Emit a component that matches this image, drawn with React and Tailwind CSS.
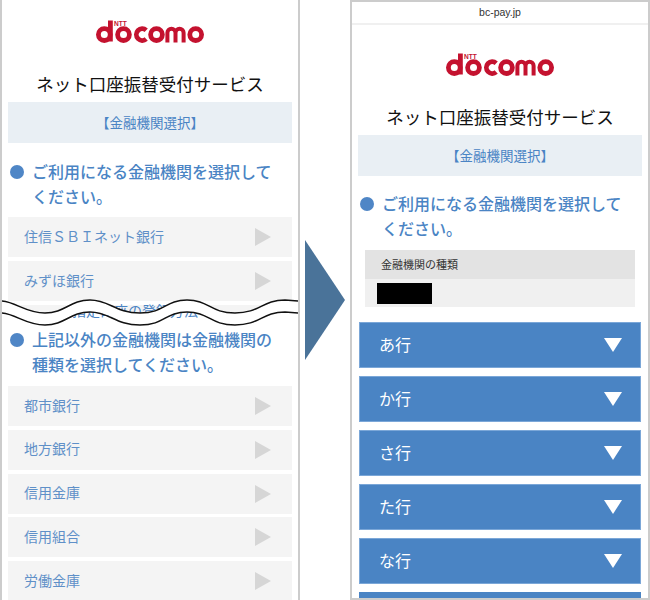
const JP = { fontFamily: '"Noto Sans CJK JP", sans-serif' };

function Logo({ className }) {
  const red = "#c4122f";
  return (
    <svg viewBox="0 0 108 23" className={className} aria-label="NTT docomo">
      <g fill="none" stroke={red} strokeWidth="4.8">
        <circle cx="8.3" cy="14.6" r="5.9" />
        <path d="M14.4 0.5V21.5" />
        <circle cx="27.5" cy="14.6" r="5.9" />
        <path d="M50.2 10.2A5.9 5.9 0 1 0 50.2 19" />
        <circle cx="60.5" cy="14.6" r="5.9" />
        <path d="M71.4 22.5V12.8A3.8 3.8 0 0 1 79.5 12.8V22.5M79.5 12.8A3.8 3.8 0 0 1 87.6 12.8V22.5" strokeWidth="4" />
        <circle cx="99.7" cy="14.6" r="5.9" />
      </g>
      <text x="18" y="5.6" fill={red} fontSize="6.6" fontWeight="700" fontFamily="Liberation Sans, sans-serif">NTT</text>
    </svg>
  );
}

function Heading({ lines, className = "" }) {
  return (
    <div className={`flex gap-2 text-[16px] leading-[25px] font-medium text-[#4a84c4] ${className}`}>
      <span className="mt-[6px] h-[14px] w-[14px] shrink-0 rounded-full bg-[#4f86c6]" />
      <p>
        {lines.map((l) => (
          <span key={l} className="block whitespace-nowrap">{l}</span>
        ))}
      </p>
    </div>
  );
}

function GrayRow({ label }) {
  return (
    <div className="flex h-[40px] shrink-0 items-center justify-between bg-[#f4f4f4] pl-4 pr-[21px] text-[14px] text-[#5f90c8]">
      <span className="pb-[2px]">{label}</span>
      <svg width="16" height="18" viewBox="0 0 16 18"><path d="M0 0L16 9L0 18Z" fill="#d6d6d6" /></svg>
    </div>
  );
}

function BlueRow({ label }) {
  return (
    <div className="mx-px flex h-[46px] shrink-0 items-center justify-between border border-[#7ba7d8] bg-[#4a84c4] pl-[19px] pr-[18px] text-[16px] text-white">
      <span className="pb-[2px]">{label}</span>
      <svg width="18" height="14" viewBox="0 0 18 14"><path d="M0 0H18L9 14Z" fill="#fff" /></svg>
    </div>
  );
}

function Banner() {
  return (
    <div className="flex h-[41px] items-center justify-center bg-[#e9eff4] pb-px text-[13.5px] text-[#4a84c4]">
      【金融機関選択】
    </div>
  );
}

function Wave() {
  const top = "M0 301C15 301 25 313 45 313S70 300 90 300S115 313 140 313S165 300 187 300S210 313 235 313S262 300 285 300L298 301";
  const bottomBack = "L298 313L285 312C262 312 257 325 235 325S209 312 187 312S162 325 140 325S112 312 90 312S67 325 45 325S15 313 0 313Z";
  const bottom = "M0 313C15 313 25 325 45 325S70 312 90 312S115 325 140 325S165 312 187 312S210 325 235 325S262 312 285 312L298 313";
  return (
    <svg className="absolute left-0 top-[296px] h-[34px] w-[296px]" viewBox="2 296 296 34" fill="none">
      <path d={`${top}V330H0Z`} fill="#fff" />
      <text x="135" y="316" textAnchor="middle" fill="#4a84c4" fontSize="14" style={JP}>指定口座の登録方法</text>
      <path d={`${top}${bottomBack}`} fill="#fff" />
      <path d={top} stroke="#111" strokeWidth="1.5" />
      <path d={bottom} stroke="#111" strokeWidth="1.5" />
    </svg>
  );
}

export default function App() {
  return (
    <div className="flex h-[600px] w-[650px] overflow-hidden bg-white" style={JP}>
      <section className="relative flex h-full w-[300px] shrink-0 flex-col overflow-hidden border-x-2 border-[#cccccc] px-[6px]">
        <Logo className="mx-auto mt-[20px] h-[23px] w-[108px] shrink-0" />
        <h1 className="mt-[27px] h-[28px] shrink-0 text-center text-[17.5px] leading-[28px] text-[#111]">ネット口座振替受付サービス</h1>
        <div className="mt-[4px] shrink-0"><Banner /></div>
        <Heading className="mt-[16px] shrink-0 pl-[2px]" lines={["ご利用になる金融機関を選択して", "ください。"]} />
        <div className="mt-[8px] flex shrink-0 flex-col gap-1">
          <GrayRow label="住信ＳＢＩネット銀行" />
          <GrayRow label="みずほ銀行" />
          <div className="h-[20px] bg-[#f4f4f4]" />
        </div>
        <Heading className="mt-[2px] shrink-0 pl-[2px]" lines={["上記以外の金融機関は金融機関の", "種類を選択してください。"]} />
        <div className="mt-[9px] flex flex-col gap-[3.75px]">
          <GrayRow label="都市銀行" />
          <GrayRow label="地方銀行" />
          <GrayRow label="信用金庫" />
          <GrayRow label="信用組合" />
          <GrayRow label="労働金庫" />
        </div>
        <Wave />
      </section>

      <div className="flex w-[50px] shrink-0 items-center pl-[5px]">
        <svg width="40" height="120" viewBox="0 0 40 120"><path d="M0 0L40 60L0 120Z" fill="#4a7399" /></svg>
      </div>

      <section className="flex h-full w-[300px] shrink-0 flex-col overflow-hidden border-2 border-[#cccccc] px-[6px]">
        <div className="-mx-[6px] flex h-[23px] shrink-0 items-center justify-center border-b-2 border-[#f0f0f0] text-[10.5px] text-[#333]" style={{ fontFamily: '"Liberation Sans", sans-serif' }}>bc-pay.jp</div>
        <Logo className="mx-auto mt-[28px] h-[23px] w-[108px] shrink-0" />
        <h1 className="mt-[27px] h-[28px] shrink-0 text-center text-[17.5px] leading-[28px] text-[#111]">ネット口座振替受付サービス</h1>
        <div className="mt-[4px] shrink-0"><Banner /></div>
        <Heading className="mt-[15px] shrink-0 pl-[2px]" lines={["ご利用になる金融機関を選択して", "ください。"]} />
        <div className="mx-[7px] mt-[9px] shrink-0 text-[#333]">
          <div className="flex h-[29px] items-center bg-[#e3e3e3] pl-4 text-[11px]">金融機関の種類</div>
          <div className="flex h-[28px] items-center bg-[#f0f0f0] pl-3">
            <span className="h-[21px] w-[55px] bg-black" />
          </div>
        </div>
        <div className="mt-[15px] flex flex-col gap-2">
          <BlueRow label="あ行" />
          <BlueRow label="か行" />
          <BlueRow label="さ行" />
          <BlueRow label="た行" />
          <BlueRow label="な行" />
          <div className="mx-px h-[46px] shrink-0 bg-[#4a84c4]" />
        </div>
      </section>
    </div>
  );
}
